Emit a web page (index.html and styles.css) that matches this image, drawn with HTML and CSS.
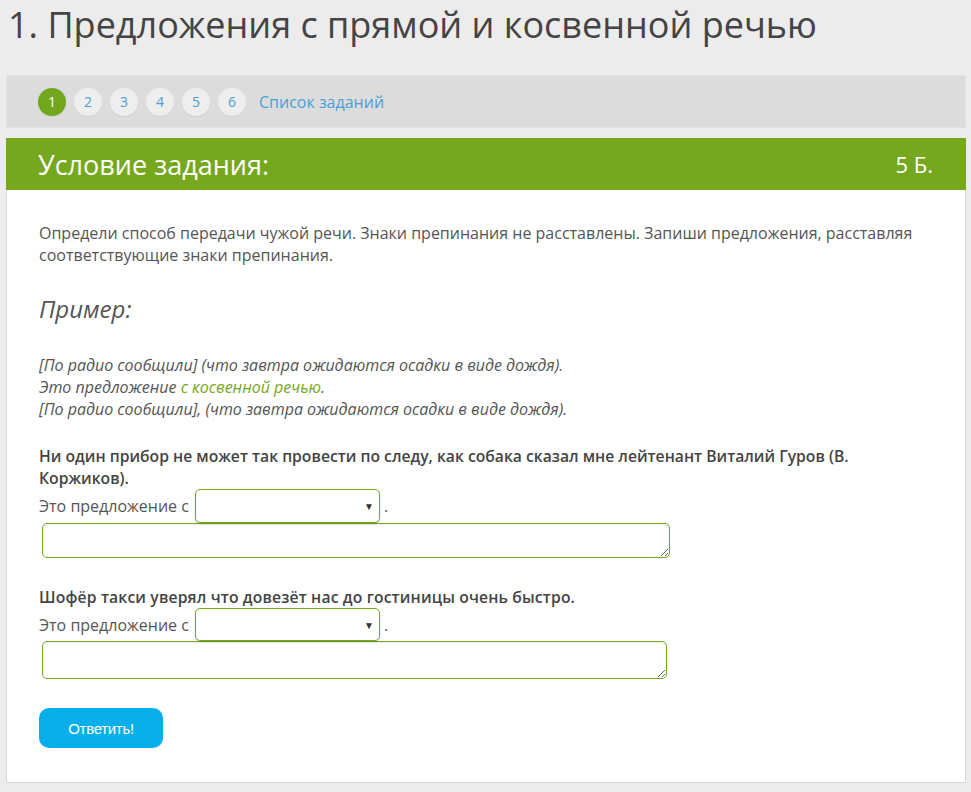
FILE: index.html
```html
<!DOCTYPE html>
<html lang="ru">
<head>
<meta charset="utf-8">
<title>Предложения с прямой и косвенной речью</title>
<link rel="stylesheet" href="styles.css">
</head>
<body>
<h1 class="title">1. Предложения с прямой и косвенной речью</h1>
<nav class="steps">
  <span class="step active">1</span>
  <span class="step">2</span>
  <span class="step">3</span>
  <span class="step">4</span>
  <span class="step">5</span>
  <span class="step">6</span>
  <a class="list-link" href="#">Список заданий</a>
</nav>
<section class="card">
  <header class="card-head">
    <h2 class="card-title">Условие задания:</h2>
    <span class="points">5 Б.</span>
  </header>
  <div class="card-body">
    <p class="task">Определи способ передачи чужой речи. Знаки препинания не расставлены. Запиши предложения, расставляя соответствующие знаки препинания.</p>
    <h3 class="example-title">Пример:</h3>
    <p class="example">[По радио сообщили] (что завтра ожидаются осадки в виде дождя).<br>Это предложение <span class="green">с косвенной речью</span>.<br>[По радио сообщили], (что завтра ожидаются осадки в виде дождя).</p>

    <div class="question q1">
      <p class="q-text">Ни один прибор не может так провести по следу, как собака сказал мне лейтенант Виталий Гуров (В. Коржиков).</p>
      <div class="q-row"><span class="lbl">Это предложение с</span><span class="sel"><select class="select"><option></option></select></span><span class="dot">.</span></div>
      <textarea class="answer a1"></textarea>
    </div>

    <div class="question q2">
      <p class="q-text q-short">Шофёр такси уверял что довезёт нас до гостиницы очень быстро.</p>
      <div class="q-row"><span class="lbl">Это предложение с</span><span class="sel"><select class="select s2"><option></option></select></span><span class="dot">.</span></div>
      <textarea class="answer a2"></textarea>
    </div>

    <button class="submit">Ответить!</button>
  </div>
</section>
</body>
</html>
```

FILE: styles.css
```css
html, body {
  margin: 0;
  padding: 0;
}
body {
  background: #ececec;
  font-family: "Open Sans", "Noto Sans", sans-serif;
  color: #555;
  padding: 0 5px 0 6px;
}
.title {
  margin: 0 0 26px;
  padding: 0 0 0 2px;
  font-size: 36px;
  font-weight: 400;
  line-height: 49px;
  color: #444;
}
.steps {
  background: #dcdcdc;
  border: 1px solid #e2e2e2;
  box-sizing: border-box;
  height: 53px;
  display: flex;
  align-items: center;
  padding-left: 31px;
  gap: 8px;
}
.step {
  width: 28px;
  height: 28px;
  border-radius: 50%;
  background: #eeeeee;
  color: #4a9fd8;
  font-size: 14px;
  line-height: 28px;
  text-align: center;
  box-shadow: 0 1px 1px rgba(0,0,0,0.06);
}
.step.active {
  background: #72a61c;
  color: #fff;
}
.list-link {
  margin-left: 5px;
  color: #4a9fd8;
  text-decoration: none;
  font-size: 16px;
}
.card {
  margin-top: 10px;
  background: #fff;
  border: 1px solid #d8d8d8;
  border-top: none;
}
.card-head {
  background: #76a81f;
  height: 52px;
  display: flex;
  align-items: center;
  justify-content: space-between;
  padding: 0 33px 0 32px;
  color: #fff;
  margin: 0 -1px;
}
.card-title {
  margin: 0;
  font-size: 27px;
  font-weight: 400;
}
.points {
  font-size: 22px;
}
.card-body {
  padding: 32px 46px 34px 32px;
}
.task {
  margin: 0;
  font-size: 16px;
  line-height: 22px;
}
.example-title {
  margin: 27px 0 0;
  font-size: 24px;
  font-style: italic;
  font-weight: 400;
  line-height: 32px;
  color: #555;
}
.example {
  margin: 29px 0 0;
  font-size: 16px;
  font-style: italic;
  line-height: 22px;
}
.green {
  color: #76a81f;
}
.question {
  margin-top: 25px;
}
.q2 {
  margin-top: 28px;
}
.q-text {
  margin: 0;
  font-size: 15.7px;
  font-weight: 600;
  line-height: 22px;
  color: #444;
}
.q-short {
  letter-spacing: 0.15px;
}
.q-row {
  display: flex;
  align-items: center;
  font-size: 16px;
}
.lbl {
  margin-right: 6px;
}
.dot {
  margin-left: 4px;
}
.sel {
  position: relative;
  display: inline-block;
}
.sel::after {
  content: "▼";
  position: absolute;
  right: 6px;
  top: 50%;
  transform: translateY(-50%);
  font-size: 10px;
  color: #333;
  pointer-events: none;
}
.select {
  appearance: none;
  -webkit-appearance: none;
  width: 185px;
  height: 34px;
  border: 1px solid #76a81f;
  border-radius: 5px;
  background: #fff;
  box-shadow: 0 1px 2px rgba(0,0,0,0.15);
  font-family: inherit;
  display: block;
}
.s2 {
  height: 33px;
}
.answer {
  display: block;
  margin: 0 0 0 3px;
  width: 628px;
  height: 35px;
  box-sizing: border-box;
  border: 1px solid #76a81f;
  border-radius: 5px;
  font-family: inherit;
  box-shadow: inset 0 1px 2px rgba(0,0,0,0.08);
}
.a2 {
  width: 625px;
  height: 38px;
}
.submit {
  margin-top: 29px;
  width: 124px;
  height: 40px;
  border: none;
  border-radius: 10px;
  background: #0aaeea;
  color: #fff;
  font-family: "Liberation Sans", Arial, sans-serif;
  font-size: 15px;
  letter-spacing: -0.3px;
  display: block;
}
```
